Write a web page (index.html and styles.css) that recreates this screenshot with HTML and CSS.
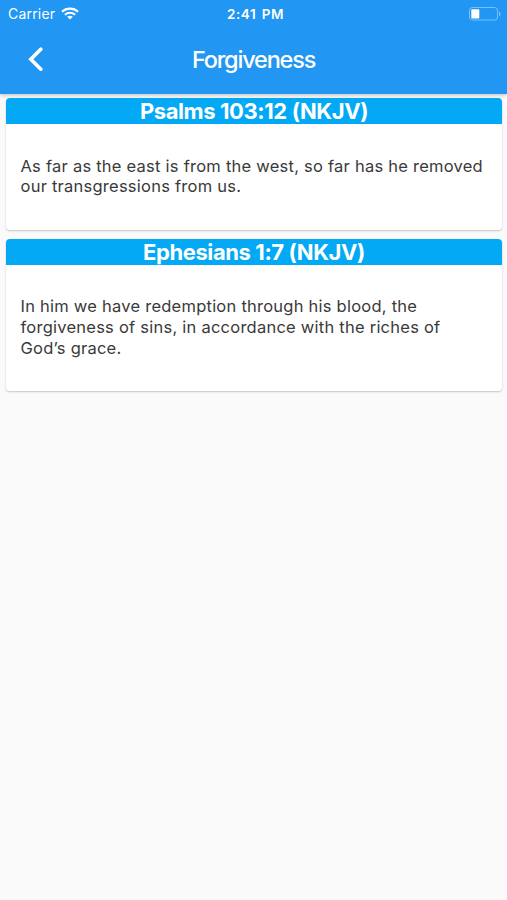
FILE: index.html
```html
<!DOCTYPE html>
<html lang="en">

<head>
  <meta charset="UTF-8">
  <meta name="viewport" content="width=device-width, initial-scale=1.0">
  <title>Forgiveness</title>
  <link rel="stylesheet" href="styles.css">
</head>

<body>
  <header class="header">
    <div class="status-bar">
      <div class="carrier">
        <span>Carrier</span>
        <svg class="wifi" viewBox="0 0 18 13" width="18" height="13">
          <path d="M1 4.800C5.400.6 12.600.6 17 4.800M3.900 7.700c2.900-2.600 7.300-2.600 10.200 0" fill="none" stroke="#fff" stroke-width="2.1" />
          <path d="M6.200 9.800c1.600-1.400 4-1.400 5.600 0L9 12.600z" fill="#fff" />
        </svg>
      </div>
      <div class="time">2:41 PM</div>
      <svg class="battery" viewBox="0 0 32 14" width="32" height="14">
        <rect x=".5" y=".5" width="28" height="12.5" rx="3" fill="none" stroke="#fff" stroke-opacity=".4" />
        <rect x="2.300" y="2.200" width="8" height="9.300" rx="1" fill="#fff" />
        <path d="M30 4.500c2 .8 2 4.200 0 5z" fill="#fff" fill-opacity=".4" />
      </svg>
    </div>
    <div class="nav-bar">
      <svg class="back" viewBox="0 0 16 24" width="16" height="24">
        <path d="M12.800 2.200L2.800 12.200l10 10" fill="none" stroke="#fff" stroke-width="3.600" stroke-linecap="round" />
      </svg>
      <h1 class="title">Forgiveness</h1>
    </div>
  </header>

  <main class="verses">
    <section class="card">
      <h2 class="card-title">Psalms 103:12 (NKJV)</h2>
      <p class="card-text">As far as the east is from the west, so far has he removed<br>our transgressions from us.</p>
    </section>
    <section class="card">
      <h2 class="card-title">Ephesians 1:7 (NKJV)</h2>
      <p class="card-text">In him we have redemption through his blood, the<br>forgiveness of sins, in accordance with the riches of<br>God’s grace.</p>
    </section>
  </main>
</body>

</html>
```
FILE: styles.css
```css
* {
  box-sizing: border-box;
}

body {
  margin: 0;
  min-height: 900px;
  background-color: #fafafa;
  font-family: Inter, "Liberation Sans", sans-serif;
}

.header {
  height: 94px;
  background-color: #2196f3;
  color: #fff;
  box-shadow: 0 1px 4px rgba(0, 0, 0, 0.25);
}

.status-bar {
  display: grid;
  grid-template-columns: 1fr auto 1fr;
  align-items: center;
  height: 27px;
  padding: 0 6px 0 8px;
}

.carrier {
  display: flex;
  align-items: center;
  gap: 6px;
  font-size: 14px;
  letter-spacing: 0.2px;
}

.time {
  padding-left: 2px;
  font-size: 13.5px;
  font-weight: 600;
  letter-spacing: 0.6px;
  word-spacing: 1.5px;
}

.battery {
  justify-self: end;
}

.nav-bar {
  display: grid;
  grid-template-columns: 1fr auto 1fr;
  align-items: center;
  height: 64px;
  padding: 0 28px;
}

.title {
  margin: 0;
  font-size: 23.5px;
  font-weight: 500;
  letter-spacing: -1.2px;
}

.verses {
  display: flex;
  flex-direction: column;
  gap: 9px;
  padding: 4px 5px 0 6px;
}

.card {
  border-radius: 4px;
  overflow: hidden;
  background-color: #fff;
  box-shadow: 0 1px 2px rgba(0, 0, 0, 0.22);
}

.card-title {
  margin: 0;
  height: 26px;
  background-color: #03a9f4;
  color: #fff;
  font-size: 22px;
  font-weight: 700;
  line-height: 26px;
  letter-spacing: -0.4px;
  text-align: center;
}

.card-text {
  margin: 0;
  padding: 31.5px 14.5px 32.5px;
  color: #3a3a3a;
  font-size: 16.5px;
  line-height: 20.8px;
  letter-spacing: 0.24px;
  white-space: nowrap;
}
```
